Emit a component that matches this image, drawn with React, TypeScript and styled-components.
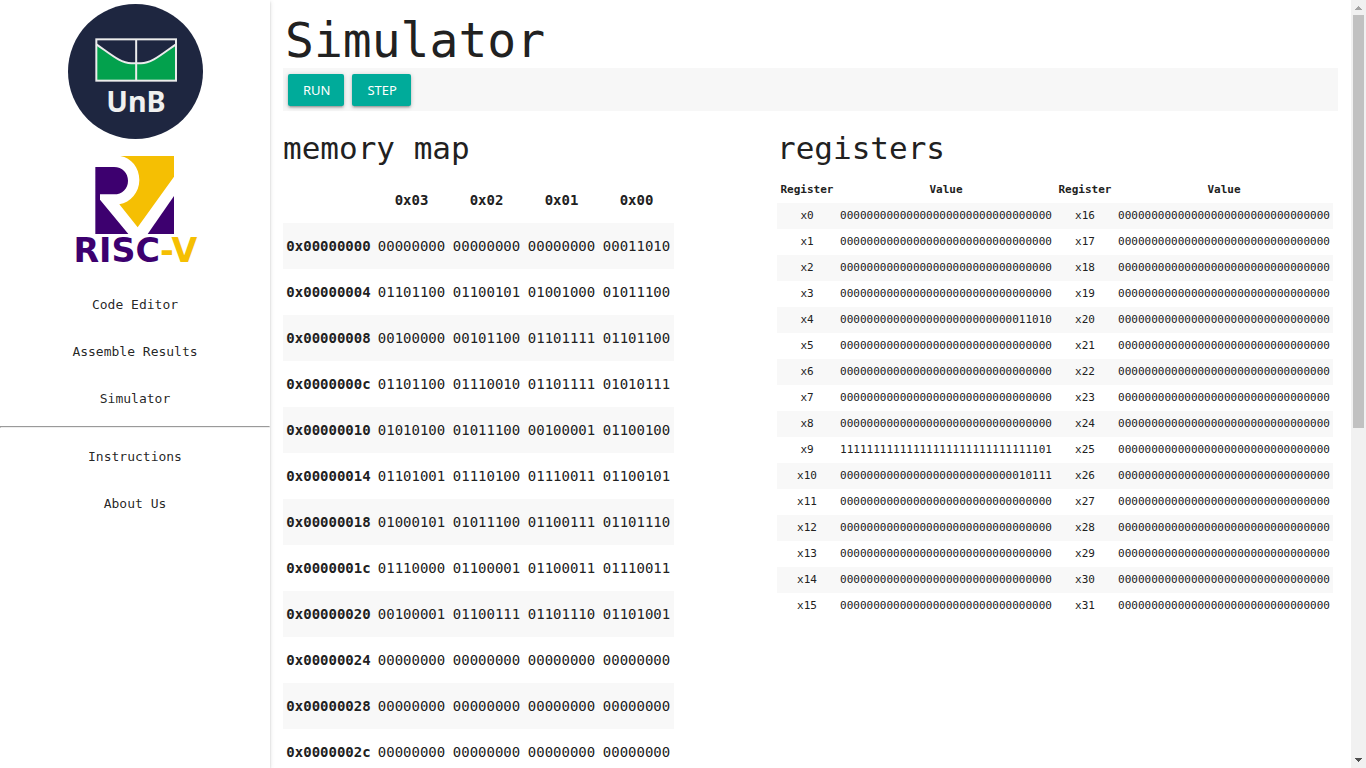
import React from "react";
import styled, { createGlobalStyle } from "styled-components";

const GlobalStyle = createGlobalStyle`
  *, *::before, *::after { box-sizing: border-box; }
  body {
    margin: 0;
    background: #fff;
    color: #212121;
    font-family: "DejaVu Sans Mono", monospace;
    font-size: 14px;
  }
`;

const Page = styled.div`
  display: flex;
  height: 100vh;
  overflow: hidden;
`;

const Sidebar = styled.aside`
  flex: 0 0 270px;
  padding-top: 4px;
  background: #fff;
  box-shadow: 0 2px 2px 0 rgba(0, 0, 0, 0.14), 0 1px 5px 0 rgba(0, 0, 0, 0.12),
    0 3px 1px -2px rgba(0, 0, 0, 0.2);
`;

const Logos = styled.div`
  display: flex;
  flex-direction: column;
  align-items: center;
  gap: 17px;
  margin-bottom: 19px;

  svg {
    display: block;
    width: 50%;
    height: auto;
    overflow: visible;
  }
`;

const NavList = styled.ul`
  list-style: none;
  margin: 0;
  padding: 0;
`;

const NavLink = styled.a`
  display: block;
  line-height: 47px;
  font-size: 13px;
  text-align: center;
  color: rgba(0, 0, 0, 0.87);
  text-decoration: none;
`;

const Divider = styled.hr`
  margin: 4px 0 5px;
`;

const Main = styled.main`
  flex: 1;
  min-width: 0;
  padding: 0 13px;
  overflow: hidden;
`;

const Title = styled.h1`
  margin: 0;
  padding: 13px 2px 0;
  font-size: 48px;
  line-height: 55px;
  font-weight: 400;
`;

const Toolbar = styled.div`
  display: flex;
  gap: 8px;
  padding: 6px 5px 5px;
  background: #f7f7f7;
`;

const ActionButton = styled.button`
  height: 32px;
  padding: 0 14px 0 15px;
  border: 0;
  border-radius: 2px;
  background: #00ab9a;
  color: #fff;
  font-family: "Noto Sans", sans-serif;
  font-size: 13px;
  line-height: 32px;
  text-transform: uppercase;
  cursor: pointer;
  box-shadow: 0 2px 2px 0 rgba(0, 0, 0, 0.14), 0 3px 1px -2px rgba(0, 0, 0, 0.12),
    0 1px 5px 0 rgba(0, 0, 0, 0.2);
`;

const Columns = styled.div`
  display: grid;
  grid-template-columns: minmax(0, 1fr) auto;
  padding-right: 5px;
`;

const SectionTitle = styled.h2`
  margin: 0;
  padding-top: 8px;
  font-size: 31px;
  line-height: 58px;
  font-weight: 400;
`;

const DataTable = styled.table<{ $dense?: boolean }>`
  table-layout: fixed;
  width: ${(p) => (p.$dense ? 556 : 391)}px;
  border-collapse: collapse;
  font-size: ${(p) => (p.$dense ? 11 : 14)}px;

  th,
  td {
    height: ${(p) => (p.$dense ? 26 : 46)}px;
    padding: ${(p) => (p.$dense ? "0 0 2px" : "0")};
    text-align: center;
    white-space: nowrap;
  }

  tbody tr:nth-child(odd) {
    background: #f8f8f8;
  }
`;

const Col = styled.col<{ $width: number }>`
  width: ${(p) => p.$width}px;
`;

const ScrollTrack = styled.div`
  flex: 0 0 15px;
  display: flex;
  flex-direction: column;
  background: #f1f1f1;

  svg {
    display: block;
    flex: none;
  }
`;

const ScrollLane = styled.div`
  flex: 1;
  padding: 0 2px;
`;

const ScrollThumb = styled.div`
  height: 56%;
  background: #c1c1c1;
`;

const offsets = ["0x03", "0x02", "0x01", "0x00"];

const memory: [string, string][] = [
  ["0x00000000", "00000000 00000000 00000000 00011010"],
  ["0x00000004", "01101100 01100101 01001000 01011100"],
  ["0x00000008", "00100000 00101100 01101111 01101100"],
  ["0x0000000c", "01101100 01110010 01101111 01010111"],
  ["0x00000010", "01010100 01011100 00100001 01100100"],
  ["0x00000014", "01101001 01110100 01110011 01100101"],
  ["0x00000018", "01000101 01011100 01100111 01101110"],
  ["0x0000001c", "01110000 01100001 01100011 01110011"],
  ["0x00000020", "00100001 01100111 01101110 01101001"],
  ["0x00000024", "00000000 00000000 00000000 00000000"],
  ["0x00000028", "00000000 00000000 00000000 00000000"],
  ["0x0000002c", "00000000 00000000 00000000 00000000"],
];

const registers: Record<number, string> = {
  4: "11010".padStart(32, "0"),
  9: "01".padStart(32, "1"),
  10: "10111".padStart(32, "0"),
};

const registerValue = (index: number) => registers[index] ?? "0".repeat(32);

function UnbLogo() {
  return (
    <svg viewBox="24 12 405 405" role="img" aria-label="UnB">
      <circle cx="226.5" cy="214.5" r="202.5" fill="#1e2640" />
      <path
        d="M109 136C150 164 182 190 214 190H243C275 190 307 164 348 136V242H109Z"
        fill="#03a14d"
      />
      <g fill="none" stroke="#ececec" strokeWidth="6">
        <rect x="109" y="118" width="239" height="124" />
        <path d="M228.500 118V242" />
        <path d="M109 133C150 161 182 190 214 190H243C275 190 307 161 348 133" />
      </g>
      <text
        x="228"
        y="335"
        textAnchor="middle"
        fontFamily="'Noto Sans', sans-serif"
        fontWeight="700"
        fontSize="86"
        fill="#f0f0f0"
      >
        UnB
      </text>
    </svg>
  );
}

function RiscvLogo() {
  return (
    <svg viewBox="24 33 405 318" role="img" aria-label="RISC-V">
      <path
        d="M181 33H342V95L233 247L178 178C212 172 238 142 238 105C238 68 214 39 181 33Z"
        fill="#f5bf03"
      />
      <path
        d="M106 66H162C187 66 204 84 204 107C204 131 187 148 162 148H120V164L205 267H106Z"
        fill="#3d006f"
      />
      <path d="M342 153V267H263Z" fill="#3d006f" />
      <text
        x="226"
        y="351"
        textAnchor="middle"
        fontFamily="'DejaVu Sans', sans-serif"
        fontWeight="700"
        fontSize="100"
        fill="#3d006f"
      >
        RISC<tspan fill="#f5bf03">-V</tspan>
      </text>
    </svg>
  );
}

function NavItem({ children }: { children: React.ReactNode }) {
  return (
    <li>
      <NavLink href="#">{children}</NavLink>
    </li>
  );
}

export default function App() {
  return (
    <Page>
      <GlobalStyle />
      <Sidebar>
        <Logos>
          <UnbLogo />
          <RiscvLogo />
        </Logos>
        <nav>
          <NavList>
            <NavItem>Code Editor</NavItem>
            <NavItem>Assemble Results</NavItem>
            <NavItem>Simulator</NavItem>
          </NavList>
          <Divider />
          <NavList>
            <NavItem>Instructions</NavItem>
            <NavItem>About Us</NavItem>
          </NavList>
        </nav>
      </Sidebar>

      <Main>
        <Title>Simulator</Title>
        <Toolbar>
          <ActionButton type="button">Run</ActionButton>
          <ActionButton type="button">Step</ActionButton>
        </Toolbar>
        <Columns>
          <section>
            <SectionTitle id="memory">memory map</SectionTitle>
            <DataTable aria-labelledby="memory">
              <colgroup>
                <Col $width={91} />
                {offsets.map((o) => (
                  <Col key={o} $width={75} />
                ))}
              </colgroup>
              <thead>
                <tr>
                  <td />
                  {offsets.map((o) => (
                    <th key={o} scope="col">{o}</th>
                  ))}
                </tr>
              </thead>
              <tbody>
                {memory.map(([address, bytes]) => (
                  <tr key={address}>
                    <th scope="row">{address}</th>
                    {bytes.split(" ").map((b, i) => (
                      <td key={i}>{b}</td>
                    ))}
                  </tr>
                ))}
              </tbody>
            </DataTable>
          </section>
          <section>
            <SectionTitle id="registers">registers</SectionTitle>
            <DataTable $dense aria-labelledby="registers">
              <colgroup>
                <Col $width={60} />
                <Col $width={218} />
                <Col $width={60} />
                <Col $width={218} />
              </colgroup>
              <thead>
                <tr>
                  <th scope="col">Register</th>
                  <th scope="col">Value</th>
                  <th scope="col">Register</th>
                  <th scope="col">Value</th>
                </tr>
              </thead>
              <tbody>
                {Array.from({ length: 16 }, (_, i) => (
                  <tr key={i}>
                    <td>x{i}</td>
                    <td>{registerValue(i)}</td>
                    <td>x{i + 16}</td>
                    <td>{registerValue(i + 16)}</td>
                  </tr>
                ))}
              </tbody>
            </DataTable>
          </section>
        </Columns>
      </Main>

      <ScrollTrack aria-hidden="true">
        <svg width="15" height="15" viewBox="0 0 15 15" shapeRendering="crispEdges">
          <path d="M7 6h1v1h1v1h1v1h1v1H4V9h1V8h1V7h1z" fill="#a3a3a3" />
        </svg>
        <ScrollLane>
          <ScrollThumb />
        </ScrollLane>
        <svg width="15" height="15" viewBox="0 0 15 15" shapeRendering="crispEdges">
          <path d="M4 5h7v1h-1v1H9v1H8v1H7V8H6V7H5V6H4z" fill="#505050" />
        </svg>
      </ScrollTrack>
    </Page>
  );
}
